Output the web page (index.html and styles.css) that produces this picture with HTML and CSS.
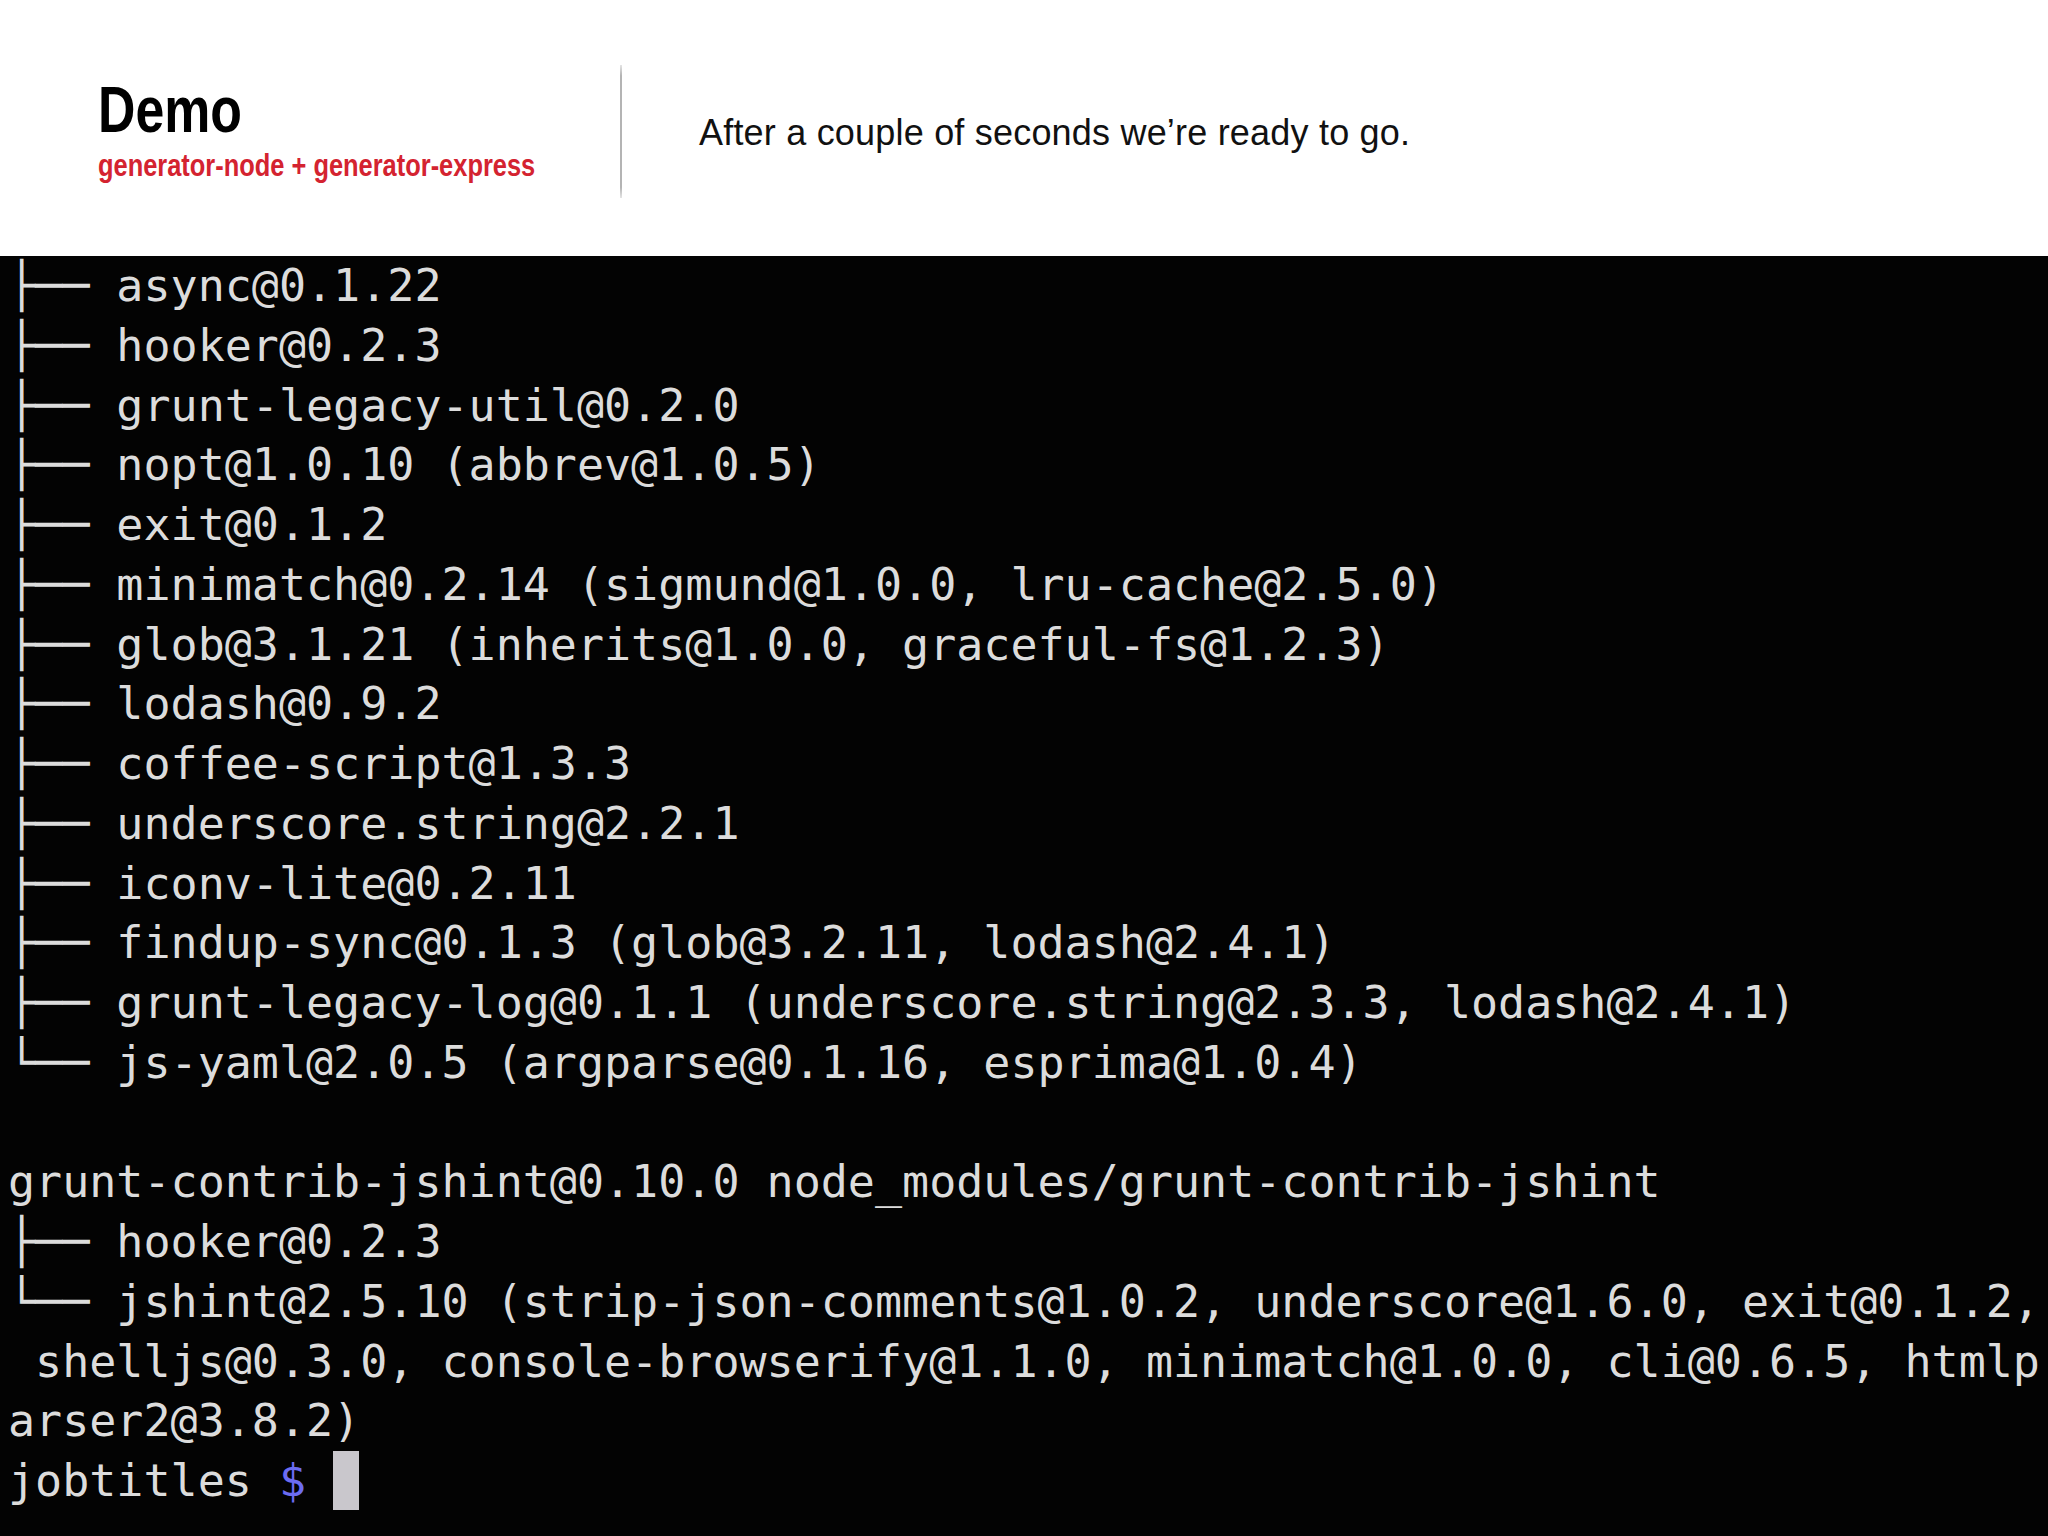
FILE: index.html
```html
<!DOCTYPE html>
<html>
<head>
<meta charset="utf-8">
<link rel="stylesheet" href="styles.css">
</head>
<body>
<header class="slide-header">
  <div class="title-block">
    <div class="title">Demo</div>
    <div class="subtitle">generator-node + generator-express</div>
  </div>
  <div class="divider"></div>
  <div class="caption">After a couple of seconds we’re ready to go.</div>
</header>
<main class="terminal"><pre class="term-text">├── async@0.1.22
├── hooker@0.2.3
├── grunt-legacy-util@0.2.0
├── nopt@1.0.10 (abbrev@1.0.5)
├── exit@0.1.2
├── minimatch@0.2.14 (sigmund@1.0.0, lru-cache@2.5.0)
├── glob@3.1.21 (inherits@1.0.0, graceful-fs@1.2.3)
├── lodash@0.9.2
├── coffee-script@1.3.3
├── underscore.string@2.2.1
├── iconv-lite@0.2.11
├── findup-sync@0.1.3 (glob@3.2.11, lodash@2.4.1)
├── grunt-legacy-log@0.1.1 (underscore.string@2.3.3, lodash@2.4.1)
└── js-yaml@2.0.5 (argparse@0.1.16, esprima@1.0.4)

grunt-contrib-jshint@0.10.0 node_modules/grunt-contrib-jshint
├── hooker@0.2.3
└── jshint@2.5.10 (strip-json-comments@1.0.2, underscore@1.6.0, exit@0.1.2,
 shelljs@0.3.0, console-browserify@1.1.0, minimatch@1.0.0, cli@0.6.5, htmlp
arser2@3.8.2)
jobtitles <span class="prompt">$</span> <span class="cursor"></span></pre></main>
</body>
</html>
```
FILE: styles.css
```css
html, body {
  margin: 0;
  padding: 0;
  background: #ffffff;
}

body {
  width: 2048px;
  height: 1536px;
  overflow: hidden;
}

.slide-header {
  display: flex;
  align-items: flex-start;
  height: 256px;
  background: #ffffff;
}

.title-block {
  flex: none;
  width: 522px;
  padding-left: 98px;
  padding-top: 78px;
}

.title {
  font-family: "Liberation Sans", Arial, sans-serif;
  font-weight: 700;
  font-size: 64px;
  line-height: 64px;
  color: #000000;
  transform: scaleX(0.81);
  transform-origin: left center;
}

.subtitle {
  margin-top: 9px;
  font-family: "Liberation Sans", Arial, sans-serif;
  font-weight: 700;
  font-size: 31px;
  line-height: 30px;
  color: #d42330;
  white-space: nowrap;
  transform: scaleX(0.82);
  transform-origin: left center;
}

.divider {
  flex: none;
  margin-top: 65px;
  width: 2px;
  height: 133px;
  background: linear-gradient(to bottom, #e4e4e4 0%, #b4b4b4 8%, #b4b4b4 92%, #e4e4e4 100%);
}

.caption {
  margin-left: 77px;
  padding-top: 115px;
  font-family: "Liberation Sans", Arial, sans-serif;
  font-size: 36px;
  line-height: 36px;
  letter-spacing: 0.2px;
  color: #111111;
  white-space: nowrap;
}

.terminal {
  display: block;
  height: 1280px;
  background: #030303;
  padding: 0 8px;
  overflow: hidden;
}

.term-text {
  margin: 0;
  font-family: "DejaVu Sans Mono", "Liberation Mono", monospace;
  font-size: 45px;
  line-height: 59.75px;
  color: #dcdcdc;
  white-space: pre;
}

.prompt {
  color: #6c6cf2;
}

.cursor {
  display: inline-block;
  width: 26px;
  height: 59px;
  vertical-align: top;
  background: #c9c7cc;
}
```
